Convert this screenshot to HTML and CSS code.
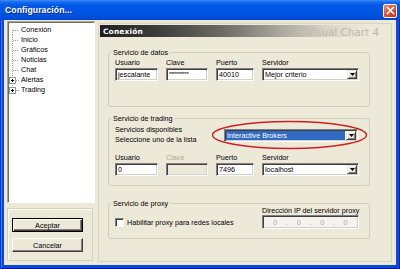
FILE: index.html
```html
<!DOCTYPE html>
<html lang="es">
<head>
  <meta charset="UTF-8" />
  <title>Configuración...</title>
  <link rel="stylesheet" href="styles.css">
</head>
<body>
  <div class="window">
    <div class="titlebar">
      <span class="title">Configuración...</span>
      <span class="close">
        <svg width="9" height="9" viewBox="0 0 9 9"><path d="M1.5 1.5 L7.5 7.5 M7.5 1.5 L1.5 7.5" stroke="#fff" stroke-width="1.6" stroke-linecap="square"/></svg>
      </span>
    </div>

    <div class="client">
      <div class="side">
        <ul class="tree">
          <li><svg class="twig" width="13" height="10"><path d="M4.5 5 V10 M5 5.5 H11" /></svg>Conexión</li>
          <li><svg class="twig" width="13" height="10"><path d="M4.5 0 V10 M5 5.5 H11" /></svg>Inicio</li>
          <li><svg class="twig" width="13" height="10"><path d="M4.5 0 V10 M5 5.5 H11" /></svg>Gráficos</li>
          <li><svg class="twig" width="13" height="10"><path d="M4.5 0 V10 M5 5.5 H11" /></svg>Noticias</li>
          <li><svg class="twig" width="13" height="10"><path d="M4.5 0 V10 M5 5.5 H11" /></svg>Chat</li>
          <li><svg class="twig" width="13" height="10"><path d="M4.5 0 V10 M8 5.5 H11" /><rect class="box" x="1.5" y="2.5" width="6" height="6"/><path class="plus" d="M3 5.5 H6 M4.5 4 V7"/></svg>Alertas</li>
          <li><svg class="twig" width="13" height="10"><path d="M4.5 0 V3 M8 5.5 H11" /><rect class="box" x="1.5" y="2.5" width="6" height="6"/><path class="plus" d="M3 5.5 H6 M4.5 4 V7"/></svg>Trading</li>
        </ul>

        <div class="actions">
          <button class="btn btn-default">Aceptar</button>
          <button class="btn">Cancelar</button>
        </div>
      </div>

      <div class="panel">
        <div class="panel-head">
          <span class="panel-title">Conexión</span>
          <span class="brand">Visual Chart 4</span>
        </div>

        <div class="group group-datos">
          <div class="group-title">Servicio de datos</div>
          <div class="fields">
            <div class="field"><span class="lbl">Usuario</span><div class="edit">jescalante</div></div>
            <div class="field"><span class="lbl">Clave</span><div class="edit pwd">**********</div></div>
            <div class="field"><span class="lbl">Puerto</span><div class="edit">40010</div></div>
            <div class="field"><span class="lbl">Servidor</span>
              <div class="edit combo"><span class="combo-text">Mejor criterio</span><span class="combo-btn"><svg width="5" height="3"><path d="M0 0 H5 L2.5 3 Z"/></svg></span></div>
            </div>
          </div>
        </div>

        <div class="group group-trading">
          <div class="group-title">Servicio de trading</div>
          <div class="services">
            <div class="services-text">Servicios disponibles<br>Seleccione uno de la lista</div>
            <div class="mark">
              <div class="edit combo combo-wide"><span class="combo-text selected">Interactive Brokers</span><span class="combo-btn"><svg width="5" height="3"><path d="M0 0 H5 L2.5 3 Z"/></svg></span></div>
              <svg class="ring" width="157" height="30"><ellipse cx="78.5" cy="15" rx="77" ry="13.5"/></svg>
            </div>
          </div>
          <div class="fields fields-trading">
            <div class="field"><span class="lbl">Usuario</span><div class="edit">0</div></div>
            <div class="field"><span class="lbl off">Clave</span><div class="edit disabled"></div></div>
            <div class="field"><span class="lbl">Puerto</span><div class="edit">7496</div></div>
            <div class="field"><span class="lbl">Servidor</span>
              <div class="edit combo"><span class="combo-text">localhost</span><span class="combo-btn"><svg width="5" height="3"><path d="M0 0 H5 L2.5 3 Z"/></svg></span></div>
            </div>
          </div>
        </div>

        <div class="group group-proxy">
          <div class="group-title">Servicio de proxy</div>
          <div class="proxy-row">
            <div class="check"><span class="check-box"></span>Habilitar proxy para redes locales</div>
            <div class="ip-block">
              <span class="lbl">Dirección IP del servidor proxy</span>
              <div class="edit ip"><span>0</span><i>.</i><span>0</span><i>.</i><span>0</span><i>.</i><span>0</span></div>
            </div>
          </div>
        </div>
      </div>
    </div>
  </div>
</body>
</html>
```

FILE: styles.css
```css
body {
  margin: 0;
  width: 400px;
  height: 269px;
  overflow: hidden;
  font-family: "Liberation Sans", Arial, sans-serif;
  font-size: 7.2px;
  color: #000;
}

.window {
  width: 400px;
  height: 269px;
  display: flex;
  flex-direction: column;
  background: #0a48d6;
  box-shadow: inset 1px 0 #0831d9, inset -1px 0 #0019a8, inset 0 -1px #0019a8, inset 2px 0 #2f7bf0, inset -2px 0 #0b4fdc;
}

/* title bar */
.titlebar {
  height: 20px;
  display: flex;
  align-items: center;
  justify-content: space-between;
  padding: 0 3px 0 5px;
  background: linear-gradient(#3c8ef8 0, #1a6cf0 2px, #0058e6 5px, #0055e3 12px, #004fdc 17px, #0044cd 20px);
}

.title {
  color: #fff;
  font-weight: bold;
  font-size: 8.6px;
  text-shadow: 1px 1px #0a2a8c;
  letter-spacing: 0.1px;
}

.close {
  width: 12px;
  height: 12px;
  margin-top: 1px;
  border: 1px solid #fff;
  border-radius: 2px;
  background: linear-gradient(135deg, #f08a6e, #e0502f 50%, #c4381c);
  display: flex;
  align-items: center;
  justify-content: center;
}

/* client area */
.client {
  flex: 1;
  margin: 0 4px 4px 4px;
  background: #ece9d8;
  display: flex;
  gap: 3px;
  padding: 1px 4px 3px 3px;
}

.side {
  width: 88px;
  display: flex;
  flex-direction: column;
}

.tree {
  list-style: none;
  margin: 0;
  padding: 3px 0 0 0;
  height: 182px;
  box-sizing: border-box;
  background: #fff;
  border: 1px solid;
  border-color: #aca899 #fff #fff #aca899;
  box-shadow: inset 1px 1px #716f64;
}

.tree li {
  display: flex;
  align-items: center;
  height: 10px;
  line-height: 10px;
}

.twig {
  flex: none;
  display: block;
}

.twig path {
  stroke: #a0a0a0;
  stroke-width: 1;
  stroke-dasharray: 1 1;
  fill: none;
}

.twig .box {
  fill: #fff;
  stroke: #8e9aa0;
}

.twig .plus {
  stroke: #000;
  stroke-dasharray: none;
}

.actions {
  margin-top: 5px;
  width: 86px;
  height: 53px;
  box-sizing: border-box;
  border: 1px solid #d3d0c0;
  box-shadow: inset 1px 1px #fff;
  padding: 9px 0 0 4px;
  display: flex;
  flex-direction: column;
  gap: 6px;
}

.btn {
  width: 71px;
  height: 14px;
  padding: 0;
  font-family: inherit;
  font-size: 7.2px;
  color: #000;
  background: #ece9d8;
  border: 1px solid;
  border-color: #fff #404040 #404040 #fff;
  box-shadow: inset -1px -1px #808080;
}

.btn-default {
  border-color: #000;
  box-shadow: inset 1px 1px #fff, inset -1px -1px #404040, inset -2px -2px #808080;
}

/* right side */
.panel {
  flex: 1;
  margin-top: 2px;
  border: 1px solid #d6d3c4;
  padding: 1px;
  display: flex;
  flex-direction: column;
}

.panel-head {
  height: 12px;
  display: flex;
  align-items: center;
  justify-content: space-between;
  padding: 0 11px 0 3px;
  background: linear-gradient(to right, #1f1f1f 0, #3d3d3a 20%, #6b6a63 42%, #a9a79c 62%, #d8d5c5 78%, #ece9d8 92%);
}

.panel-title {
  font-family: "DejaVu Sans", sans-serif;
  font-weight: bold;
  font-size: 7.4px;
  color: #fff;
  letter-spacing: 0.2px;
}

.brand {
  font-family: "DejaVu Sans", sans-serif;
  font-size: 10.4px;
  color: #bcb8ab;
  margin-top: 1px;
}

.group {
  position: relative;
  margin: 0 20px 0 8px;
  border: 1px solid #d0cdbd;
  border-radius: 3px;
  padding: 0 10px 0 6px;
}

.group-title {
  display: table;
  margin: -5px 0 0 -4px;
  padding: 0 2px;
  line-height: 9px;
  background: #ece9d8;
}

.group-datos {
  margin-top: 15px;
  padding-bottom: 25px;
}

.group-trading {
  margin-top: 11px;
  padding-bottom: 9px;
}

.group-proxy {
  margin-top: 17px;
  padding-bottom: 9px;
}

.fields {
  display: grid;
  grid-template-columns: 43px 42px 38px 97px;
  column-gap: 8px;
  margin-top: 1px;
}

.fields-trading {
  margin-top: 8px;
}

.field {
  display: flex;
  flex-direction: column;
}

.lbl {
  line-height: 9px;
  margin-bottom: 1px;
  white-space: nowrap;
}

.lbl.off {
  color: #aca899;
}

.edit {
  height: 13px;
  box-sizing: border-box;
  border: 1px solid;
  border-color: #808080 #fff #fff #808080;
  box-shadow: inset 1px 1px #404040, inset -1px -1px #d4d0c8;
  background: #fff;
  padding-left: 2px;
  line-height: 11px;
  white-space: nowrap;
  overflow: hidden;
}

.pwd {
  font-size: 6px;
  letter-spacing: -0.4px;
}

.edit.disabled {
  background: #ece9d8;
}

.combo {
  display: flex;
  padding: 1px;
}

.combo-text {
  flex: 1;
  line-height: 9px;
  padding-left: 1px;
}

.combo-text.selected {
  background: #316ac5;
  color: #fff;
  margin-right: 1px;
}

.combo-btn {
  width: 10px;
  height: 9px;
  box-sizing: border-box;
  background: #ece9d8;
  border: 1px solid;
  border-color: #ece9d8 #404040 #404040 #ece9d8;
  box-shadow: inset 1px 1px #fff, inset -1px -1px #808080;
  display: flex;
  align-items: center;
  justify-content: center;
}

.services {
  display: flex;
  align-items: center;
  margin-top: 2px;
}

.services-text {
  width: 109px;
  line-height: 10px;
}

.mark {
  position: relative;
}

.combo-wide {
  width: 134px;
}

.ring {
  position: absolute;
  left: -13px;
  top: -9px;
  pointer-events: none;
}

.ring ellipse {
  fill: none;
  stroke: #d11f1f;
  stroke-width: 1.4;
}

.proxy-row {
  display: flex;
  justify-content: space-between;
  align-items: flex-end;
  margin-top: -2px;
}

.check {
  display: flex;
  align-items: center;
  gap: 3px;
  height: 14px;
}

.check-box {
  width: 9px;
  height: 9px;
  box-sizing: border-box;
  background: #fff;
  border: 1px solid;
  border-color: #808080 #fff #fff #808080;
  box-shadow: inset 1px 1px #404040;
}

.ip-block {
  width: 97px;
  display: flex;
  flex-direction: column;
}

.ip-block .lbl {
  margin-bottom: 0;
}

.edit.ip {
  height: 14px;
  background: #f4f3ee;
  color: #aca899;
  display: flex;
  justify-content: space-around;
  align-items: center;
  padding: 0 6px;
}

.ip i {
  font-style: normal;
}
```
